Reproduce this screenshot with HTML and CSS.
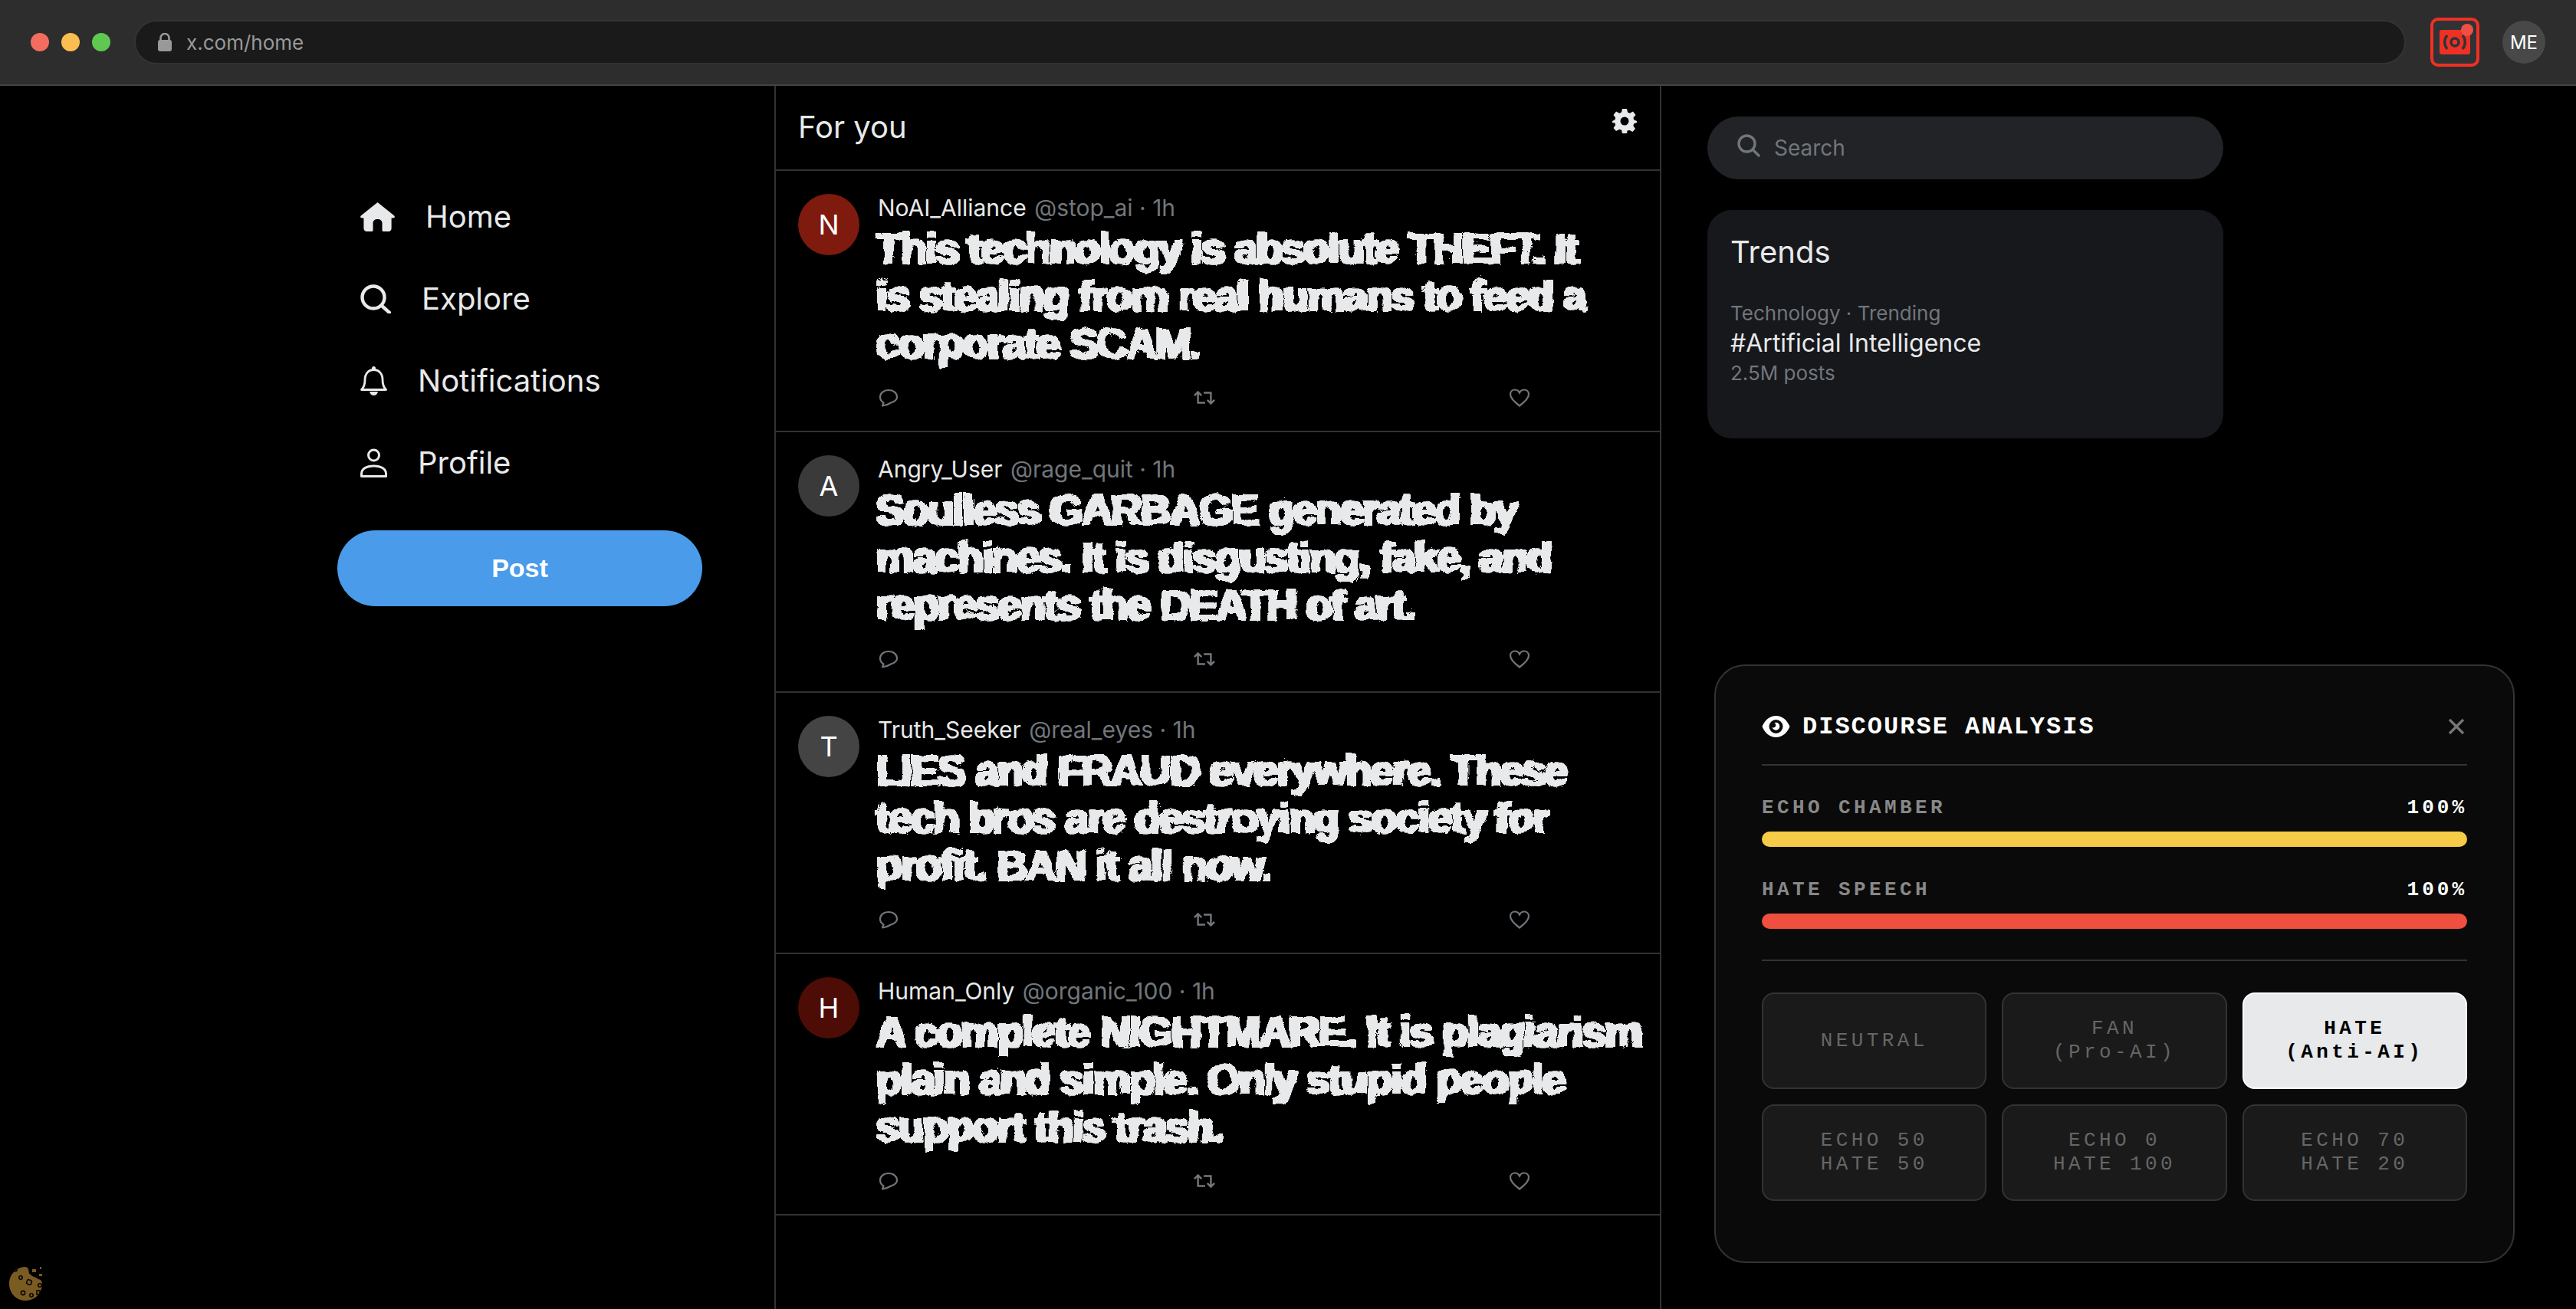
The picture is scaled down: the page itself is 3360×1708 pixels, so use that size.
FILE: index.html
```html
<!DOCTYPE html>
<html lang="en">
<head>
<meta charset="utf-8">
<title>x.com/home</title>
<link rel="stylesheet" href="styles.css">
</head>
<body>
<svg class="defs" width="0" height="0" aria-hidden="true"><filter id="jag" x="-2%" y="-5%" width="104%" height="110%"><feMorphology in="SourceGraphic" operator="dilate" radius="1.8 0.5" result="fat"/><feTurbulence type="turbulence" baseFrequency="0.045 0.03" numOctaves="1" seed="7" result="n"/><feDisplacementMap in="fat" in2="n" scale="7" xChannelSelector="R" yChannelSelector="G" result="d"/><feGaussianBlur in="d" stdDeviation="0.5" result="b"/><feComponentTransfer in="b"><feFuncA type="linear" slope="4" intercept="-1.4"/></feComponentTransfer></filter></svg>
<header class="chrome">
  <div class="dots"><i class="dot red"></i><i class="dot yellow"></i><i class="dot green"></i></div>
  <div class="url">
    <svg class="lock" viewBox="0 0 20 24"><path d="M4.5 10V6.5a5.5 5.5 0 0 1 11 0V10" fill="none" stroke="#999" stroke-width="2.6"/><rect x="1" y="9" width="18" height="15" rx="3" fill="#999"/></svg>
    <span>x.com/home</span>
  </div>
  <div class="ext">
    <svg viewBox="0 0 40 32" class="ext-icon"><rect width="40" height="32" rx="3" fill="#ee3124"/><circle cx="20" cy="16" r="5" fill="none" stroke="#2f3336" stroke-width="3.4"/><path d="M10 7a14 14 0 0 0 0 18M30 7a14 14 0 0 1 0 18" fill="none" stroke="#2f3336" stroke-width="3.4"/></svg>
    <i class="ext-badge"></i>
  </div>
  <div class="me">ME</div>
</header>

<main class="app">
  <nav class="side">
    <a class="nav-item"><svg class="ni home" viewBox="0 0 45 38"><path d="M22.5 0 44 17.2c1.6 1.4.8 3.3-1 3.3h-2.4V34c0 2.2-1.6 4-3.8 4h-6.6c-1 0-1.7-.8-1.7-1.8V27c0-3-2.6-5-5.5-5h-1c-2.9 0-5.5 2-5.5 5v9.2c0 1-.7 1.8-1.7 1.8H8.200C6 38 4.400 36.200 4.400 34V20.500H2c-1.800 0-2.600-1.900-1-3.300z" fill="#e7e9ea"/></svg><span>Home</span></a>
    <a class="nav-item"><svg class="ni explore" viewBox="0 0 40 38"><circle cx="17" cy="17" r="14.500" fill="none" stroke="#e7e9ea" stroke-width="4.400"/><path d="M28 28l10 9" stroke="#e7e9ea" stroke-width="4.400" stroke-linecap="round"/></svg><span>Explore</span></a>
    <a class="nav-item"><svg class="ni bell" viewBox="0 0 35 38"><path d="M1.500 30.500c3-3 4.500-7 4.500-13C6 10 10.500 4.500 17.500 4.500S29 10 29 17.500c0 6 1.500 10 4.500 13z" fill="none" stroke="#e7e9ea" stroke-width="2.800" stroke-linejoin="round"/><circle cx="17.500" cy="2.500" r="2.500" fill="#e7e9ea"/><path d="M12 33h11c-.6 3-2.800 5-5.500 5S12.600 36 12 33z" fill="#e7e9ea"/></svg><span>Notifications</span></a>
    <a class="nav-item"><svg class="ni user" viewBox="0 0 35 38"><circle cx="17.500" cy="9" r="7" fill="none" stroke="#e7e9ea" stroke-width="3"/><path d="M1.500 36.500V33c0-6 6-10 16-10s16 4 16 10v3.500z" fill="none" stroke="#e7e9ea" stroke-width="3" stroke-linejoin="round"/></svg><span>Profile</span></a>
    <button class="post">Post</button>
  </nav>

  <section class="feed">
    <div class="feed-head">
      <h1>For you</h1>
      <svg class="gear" viewBox="0 0 32 32"><path fill="#e7e9ea" fill-rule="evenodd" d="M13 0h6l1 4.500 2.700 1.200L27 3.500 30.500 8 27.500 11.500l.6 2.800L32 16v2l-4 1.500-.6 2.700 2.600 3.800-3.500 4-4.300-2.300-2.700 1.100L19 32h-6l-.9-4.200-2.800-1.100L5 29l-3.500-4 2.600-3.800-.6-2.700L0 18v-2l3.500-1.700.6-2.800L1.500 8 5 3.500l4.300 2.200L12 4.500zM16 10.500a5.500 5.500 0 1 0 0 11 5.500 5.500 0 0 0 0-11z"/></svg>
    </div>

    <article class="tweet">
      <div class="avatar a-n">N</div>
      <div class="t-body">
        <div class="t-meta"><b>NoAI_Alliance</b> <span>@stop_ai · 1h</span></div>
        <p class="t-text">This technology is absolute THEFT. It<br>is stealing from real humans to feed a<br>corporate SCAM.</p>
        <div class="t-actions">
          <svg class="ai" viewBox="0 0 26 24"><path d="M13 2C6.500 2 2 6 2 11c0 3.500 2 6 4.500 7.500L5 22.500c4-.5 8-2 11-4 4.500-1.500 8-4 8-7.500 0-5-4.500-9-11-9z" fill="none" stroke="#71767b" stroke-width="2.200" stroke-linejoin="round"/></svg>
          <svg class="ai" viewBox="0 0 30 22"><path d="M6 3v15h10M1 8l5-5 5 5M14 4h10v15M19 14l5 5 5-5" fill="none" stroke="#71767b" stroke-width="2.600"/></svg>
          <svg class="ai" viewBox="0 0 28 24"><path d="M14 22.500C6 16.500 2 12 2 7.500 2 4 4.500 1.500 8 1.500c2.500 0 4.800 1.500 6 4 1.200-2.500 3.500-4 6-4 3.500 0 6 2.500 6 6 0 4.500-4 9-12 15z" fill="none" stroke="#71767b" stroke-width="2.200"/></svg>
        </div>
      </div>
    </article>

    <article class="tweet">
      <div class="avatar a-a">A</div>
      <div class="t-body">
        <div class="t-meta"><b>Angry_User</b> <span>@rage_quit · 1h</span></div>
        <p class="t-text">Soulless GARBAGE generated by<br>machines. It is disgusting, fake, and<br>represents the DEATH of art.</p>
        <div class="t-actions">
          <svg class="ai" viewBox="0 0 26 24"><path d="M13 2C6.500 2 2 6 2 11c0 3.500 2 6 4.500 7.500L5 22.500c4-.5 8-2 11-4 4.500-1.500 8-4 8-7.500 0-5-4.500-9-11-9z" fill="none" stroke="#71767b" stroke-width="2.200" stroke-linejoin="round"/></svg>
          <svg class="ai" viewBox="0 0 30 22"><path d="M6 3v15h10M1 8l5-5 5 5M14 4h10v15M19 14l5 5 5-5" fill="none" stroke="#71767b" stroke-width="2.600"/></svg>
          <svg class="ai" viewBox="0 0 28 24"><path d="M14 22.500C6 16.500 2 12 2 7.500 2 4 4.500 1.500 8 1.500c2.500 0 4.800 1.500 6 4 1.200-2.500 3.500-4 6-4 3.500 0 6 2.500 6 6 0 4.500-4 9-12 15z" fill="none" stroke="#71767b" stroke-width="2.200"/></svg>
        </div>
      </div>
    </article>

    <article class="tweet">
      <div class="avatar a-t">T</div>
      <div class="t-body">
        <div class="t-meta"><b>Truth_Seeker</b> <span>@real_eyes · 1h</span></div>
        <p class="t-text">LIES and FRAUD everywhere. These<br>tech bros are destroying society for<br>profit. BAN it all now.</p>
        <div class="t-actions">
          <svg class="ai" viewBox="0 0 26 24"><path d="M13 2C6.500 2 2 6 2 11c0 3.500 2 6 4.500 7.500L5 22.500c4-.5 8-2 11-4 4.500-1.500 8-4 8-7.500 0-5-4.500-9-11-9z" fill="none" stroke="#71767b" stroke-width="2.200" stroke-linejoin="round"/></svg>
          <svg class="ai" viewBox="0 0 30 22"><path d="M6 3v15h10M1 8l5-5 5 5M14 4h10v15M19 14l5 5 5-5" fill="none" stroke="#71767b" stroke-width="2.600"/></svg>
          <svg class="ai" viewBox="0 0 28 24"><path d="M14 22.500C6 16.500 2 12 2 7.500 2 4 4.500 1.500 8 1.500c2.500 0 4.800 1.500 6 4 1.200-2.500 3.500-4 6-4 3.500 0 6 2.500 6 6 0 4.500-4 9-12 15z" fill="none" stroke="#71767b" stroke-width="2.200"/></svg>
        </div>
      </div>
    </article>

    <article class="tweet">
      <div class="avatar a-h">H</div>
      <div class="t-body">
        <div class="t-meta"><b>Human_Only</b> <span>@organic_100 · 1h</span></div>
        <p class="t-text">A complete NIGHTMARE. It is plagiarism<br>plain and simple. Only stupid people<br>support this trash.</p>
        <div class="t-actions">
          <svg class="ai" viewBox="0 0 26 24"><path d="M13 2C6.500 2 2 6 2 11c0 3.500 2 6 4.500 7.500L5 22.500c4-.5 8-2 11-4 4.500-1.500 8-4 8-7.500 0-5-4.500-9-11-9z" fill="none" stroke="#71767b" stroke-width="2.200" stroke-linejoin="round"/></svg>
          <svg class="ai" viewBox="0 0 30 22"><path d="M6 3v15h10M1 8l5-5 5 5M14 4h10v15M19 14l5 5 5-5" fill="none" stroke="#71767b" stroke-width="2.600"/></svg>
          <svg class="ai" viewBox="0 0 28 24"><path d="M14 22.500C6 16.500 2 12 2 7.500 2 4 4.500 1.500 8 1.500c2.500 0 4.800 1.500 6 4 1.200-2.500 3.500-4 6-4 3.500 0 6 2.500 6 6 0 4.500-4 9-12 15z" fill="none" stroke="#71767b" stroke-width="2.200"/></svg>
        </div>
      </div>
    </article>
  </section>

  <aside class="rail">
    <div class="search">
      <svg class="s-icon" viewBox="0 0 30 30"><circle cx="12.500" cy="12.500" r="10.500" fill="none" stroke="#71767b" stroke-width="3.400"/><path d="M20 20l8 8" stroke="#71767b" stroke-width="3.400" stroke-linecap="round"/></svg>
      <span>Search</span>
    </div>
    <div class="trends">
      <h2>Trends</h2>
      <div class="tr-cat">Technology · Trending</div>
      <div class="tr-name">#Artificial Intelligence</div>
      <div class="tr-cat">2.5M posts</div>
    </div>
  </aside>

  <div class="panel">
    <div class="p-head">
      <svg class="eye" viewBox="0 0 36 28"><path fill="#fff" fill-rule="evenodd" d="M18 0c8 0 14.500 5.500 18 14-3.500 8.500-10 14-18 14S3.500 22.500 0 14C3.500 5.500 10 0 18 0zm0 5a9 9 0 1 0 0 18 9 9 0 0 0 0-18z"/><path fill="#fff" d="M16 9a5 5 0 1 1-3 6c2 1 4 0 4.500-1.500S17.500 10 16 9z"/></svg>
      <span class="p-title">DISCOURSE ANALYSIS</span>
      <svg class="close" viewBox="0 0 22 22"><path d="M2 2l18 18M20 2L2 20" stroke="#777" stroke-width="3.200"/></svg>
    </div>
    <div class="meters">
      <div class="m-row"><span class="m-label">ECHO CHAMBER</span><span class="m-val">100%</span></div>
      <div class="bar yellow-bar"></div>
      <div class="m-row second"><span class="m-label">HATE SPEECH</span><span class="m-val">100%</span></div>
      <div class="bar red-bar"></div>
    </div>
    <div class="opts">
      <button class="opt">NEUTRAL</button>
      <button class="opt">FAN<br>(Pro-AI)</button>
      <button class="opt on">HATE<br>(Anti-AI)</button>
      <button class="opt">ECHO 50<br>HATE 50</button>
      <button class="opt">ECHO 0<br>HATE 100</button>
      <button class="opt">ECHO 70<br>HATE 20</button>
    </div>
  </div>

  <svg class="cookie" viewBox="0 0 46 46">
    <path d="M21 1c3 0 4 1 5 3 1 3 0 6 3 7 2 3 5 3 7 4 2 2 4 2 6 3 1 2 2 3 2 5 0 12-9 22-22 22C10 45 1 35 1 23 1 11 10 2 21 1z" fill="#7a5b22"/>
    <rect x="31" y="4" width="5" height="4" fill="#7a5b22"/><rect x="41" y="1" width="2" height="3" fill="#7a5b22"/><rect x="40" y="10" width="4" height="3" fill="#7a5b22"/>
    <g fill="none" stroke="#0b0805" stroke-width="1.600"><circle cx="9" cy="5" r="2"/><circle cx="16" cy="15" r="2.200"/><rect x="24" y="18" width="6" height="6" rx="1.500" transform="rotate(20 27 21)"/><circle cx="41" cy="25" r="2.300"/><circle cx="19" cy="35" r="2.600"/><circle cx="30" cy="38" r="2.200"/><rect x="37" y="32" width="4" height="5"/></g>
  </svg>
</main>
</body>
</html>
```

FILE: styles.css
```css
* { box-sizing: border-box; margin: 0; padding: 0; }
html, body { height: 100%; }
body { background: #000; color: #e7e9ea; font-family: Inter, "Noto Sans", sans-serif; overflow: hidden; display: flex; flex-direction: column; }
.defs { position: absolute; }
button { font: inherit; cursor: pointer; }

.chrome { height: 112px; flex: none; display: flex; align-items: center; background: #2d2d2d; border-bottom: 2px solid #444; padding: 0 40px; }
.dots { display: flex; gap: 16px; margin-right: 31px; }
.dot { width: 24px; height: 24px; border-radius: 50%; display: block; }
.red { background: #f26d60; }
.yellow { background: #f9be4f; }
.green { background: #5fc851; }
.url { flex: 1; height: 58px; display: flex; align-items: center; gap: 18px; background: #1a1a1a; border: 2px solid #333; border-radius: 29px; padding-left: 28px; font-size: 26px; color: #999; }
.lock { width: 20px; height: 24px; }
.ext { width: 64px; height: 64px; margin-left: 32px; border: 4px solid #ee3124; border-radius: 10px; background: #2f3336; display: flex; align-items: center; justify-content: center; position: relative; }
.ext-icon { width: 40px; height: 32px; }
.ext-badge { position: absolute; top: 4px; right: 4px; width: 16px; height: 16px; border-radius: 50%; background: #ef5045; }
.me { width: 56px; height: 56px; margin-left: 30px; border-radius: 50%; background: #484848; color: #fff; font-size: 24px; display: flex; align-items: center; justify-content: center; }

.app { flex: 1; display: flex; position: relative; min-height: 0; }

.side { width: 1010px; flex: none; padding: 117px 0 0 440px; }
.nav-item { width: 476px; height: 107px; display: flex; align-items: center; gap: 40px; padding-left: 30px; font-size: 40px; color: #e7e9ea; }
.ni { flex: none; height: 38px; }
.home { width: 45px; }
.explore { width: 40px; }
.bell, .user { width: 35px; }
.post { display: block; width: 476px; height: 99px; margin-top: 35px; border: 0; border-radius: 50px; background: #4a9bea; color: #fff; font-family: "Liberation Sans", sans-serif; font-weight: 700; font-size: 34px; }

.feed { width: 1157px; flex: none; border-left: 2px solid #2f3336; border-right: 2px solid #2f3336; }
.feed-head { height: 111px; display: flex; align-items: flex-start; justify-content: space-between; padding: 30px 30px 0 29px; border-bottom: 2px solid #2f3336; }
.feed-head h1 { font-size: 40px; font-weight: 400; line-height: 48px; }
.gear { width: 32px; height: 32px; }
.tweet { height: 340.67px; display: flex; gap: 24px; padding: 28px 30px 0 29px; border-bottom: 2px solid #2f3336; }
.avatar { width: 80px; height: 80px; flex: none; margin-top: 2px; border-radius: 50%; display: flex; align-items: center; justify-content: center; color: #fff; font-size: 36px; }
.a-n { background: #7f1a0e; }
.a-a { background: #3a3a3a; }
.a-t { background: #444; }
.a-h { background: #4d0c06; }
.t-body { flex: 1; min-width: 0; }
.t-meta { font-size: 30px; line-height: 40px; white-space: nowrap; }
.t-meta b { font-weight: 400; color: #e7e9ea; margin-right: 2px; }
.t-meta span { color: #71767b; }
.t-text { margin: 0 0 0 -5px; font-family: "Liberation Sans", sans-serif; font-weight: 700; font-size: 56px; line-height: 62px; letter-spacing: -2.1px; color: #e7e9ea; white-space: nowrap; filter: url(#jag); }
.t-actions { display: flex; align-items: center; justify-content: space-between; width: 851px; margin-top: 30px; }
.ai { height: 24px; width: 28px; }

.rail { flex: 1; padding: 40px 0 0 60px; }
.search { width: 673px; height: 82px; display: flex; align-items: center; gap: 18px; border-radius: 41px; background: #212327; padding-left: 39px; font-size: 28px; color: #71767b; }
.s-icon { width: 30px; height: 30px; margin-top: -6px; }
.trends { width: 673px; height: 298px; margin-top: 40px; padding: 30px 30px 0; border-radius: 32px; background: #17181c; }
.trends h2 { font-size: 40px; font-weight: 400; line-height: 50px; margin-bottom: 36px; }
.tr-cat { font-size: 26px; line-height: 38px; color: #71767b; }
.tr-name { font-size: 32px; line-height: 40px; color: #e7e9ea; }

.panel { position: absolute; left: 2236px; top: 755px; width: 1044px; height: 781px; background: #0a0a0a; border: 2px solid #333; border-radius: 40px; padding: 46px 60px 0; font-family: "Liberation Mono", "Courier New", monospace; }
.p-head { height: 84px; display: flex; align-items: center; gap: 16px; border-bottom: 2px solid #333; padding-bottom: 16px; }
.eye { width: 37px; height: 28px; flex: none; }
.p-title { flex: 1; font-size: 32px; font-weight: 700; letter-spacing: 2px; color: #fff; }
.close { width: 22px; height: 22px; margin-right: 3px; }
.meters { padding: 39px 0 40px; border-bottom: 2px solid #333; }
.m-row { display: flex; justify-content: space-between; align-items: center; height: 32px; margin-bottom: 15px; }
.m-row.second { margin-top: 40px; }
.m-label { font-size: 26px; font-weight: 700; letter-spacing: 4.4px; color: #888; }
.m-val { font-size: 26px; font-weight: 700; letter-spacing: 4px; color: #fff; }
.bar { height: 20px; border-radius: 10px; }
.yellow-bar { background: #f5cb47; }
.red-bar { background: #ee4f3f; }
.opts { display: grid; grid-template-columns: repeat(3, 1fr); grid-auto-rows: 126px; gap: 20px; margin-top: 41px; }
.opt { background: #1a1a1a; border: 2px solid #333; border-radius: 16px; color: #666; font-family: inherit; font-size: 26px; line-height: 31px; letter-spacing: 4.4px; }
.opt.on { background: #e7e9ea; border-color: #fff; color: #000; font-weight: 700; }

.cookie { position: absolute; left: 11px; bottom: 10px; width: 46px; height: 46px; }
```
